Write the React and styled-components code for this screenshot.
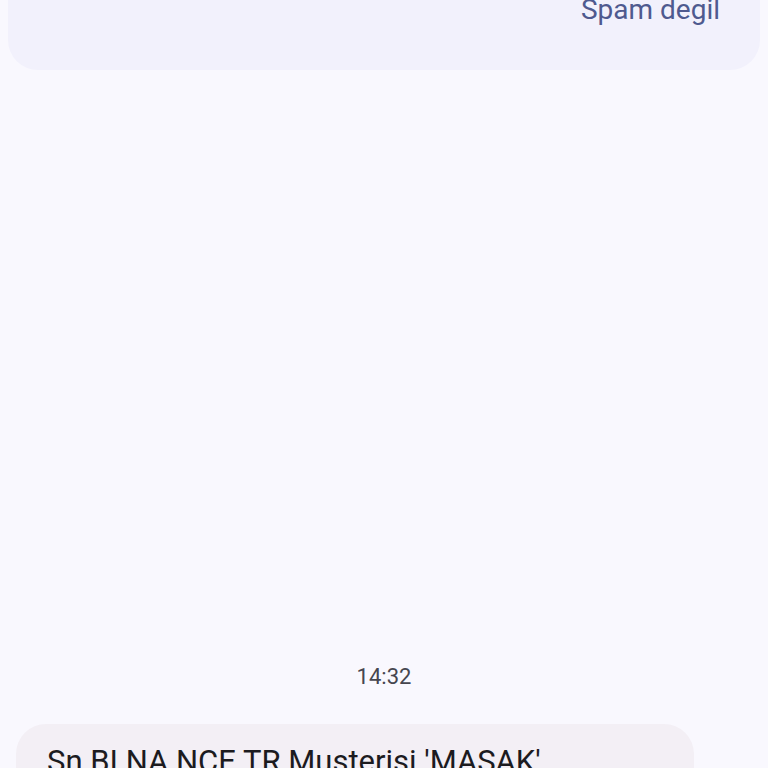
import React from "react";
import styled, { createGlobalStyle } from "styled-components";

const Global = createGlobalStyle`
  html, body {
    margin: 0;
    padding: 0;
    background: #f9f8fe;
    overflow: hidden;
  }
  body {
    font-family: Roboto, "Noto Sans", sans-serif;
  }
`;

const Screen = styled.div`
  width: 768px;
  height: 768px;
  display: flex;
  flex-direction: column;
  background: #f9f8fe;
  overflow: hidden;
`;

const SpamCard = styled.div`
  margin: 0 8px;
  height: 70px;
  flex-shrink: 0;
  display: flex;
  justify-content: flex-end;
  align-items: flex-start;
  padding-right: 40px;
  background: #f2f1fc;
  border-radius: 0 0 30px 30px;
`;

const CardButton = styled.span`
  margin-top: -6px;
  font-size: 28px;
  line-height: 32px;
  color: #4f5a8f;
`;

const Thread = styled.div`
  flex: 1;
  display: flex;
  flex-direction: column;
  justify-content: flex-end;
`;

const Stamp = styled.div`
  text-align: center;
  font-size: 22px;
  line-height: 28px;
  color: #46464f;
  margin-bottom: 33px;
`;

const Bubble = styled.div`
  margin-left: 16px;
  width: 678px;
  height: 44px;
  box-sizing: border-box;
  padding: 20px 0 0 31px;
  background: #f3eff5;
  border-radius: 30px 30px 0 0;
  font-size: 31px;
  line-height: 36px;
  color: #1c1b1f;
  white-space: nowrap;
  overflow: hidden;
`;

export default function App() {
  return (
    <>
      <Global />
      <Screen>
        <SpamCard>
          <CardButton>Spam degil</CardButton>
        </SpamCard>
        <Thread>
          <Stamp>14:32</Stamp>
          <Bubble>Sn BI NA NCE TR Musterisi 'MASAK'</Bubble>
        </Thread>
      </Screen>
    </>
  );
}
